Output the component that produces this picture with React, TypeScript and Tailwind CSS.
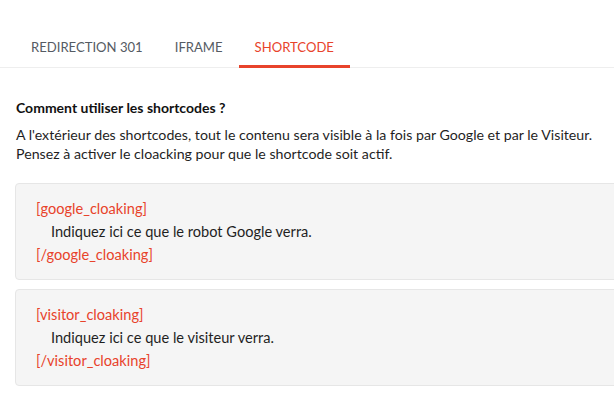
import { useState } from 'react';

const tabs = ['REDIRECTION 301', 'IFRAME', 'SHORTCODE'];

function CodeBox({ tag, body }: { tag: string; body: string }) {
  return (
    <div className="ml-[15px] -mr-[10px] rounded-[4px] border border-[#e6e6e6] bg-[#f5f5f5] px-[20px] py-[13px] text-[14.6px] leading-[23px]">
      <div className="text-[#e8432b]">[{tag}]</div>
      <div className="pl-[15px] text-[#1f1f1f]">{body}</div>
      <div className="text-[#e8432b]">[/{tag}]</div>
    </div>
  );
}

export default function App() {
  const [active, setActive] = useState(2);

  return (
    <div
      className="h-[409px] w-[614px] overflow-hidden bg-white"
      style={{ fontFamily: 'Lato, "Open Sans", sans-serif' }}
    >
      <div className="mt-[29px] flex border-b border-[#eeeeee] pl-[15px]">
        {tabs.map((t, i) => (
          <button
            key={t}
            onClick={() => setActive(i)}
            className={
              'relative -mb-px h-[39px] px-[16px] pt-px text-[13.1px] ' +
              (i === active
                ? 'border-b-[3px] border-[#e8432b] text-[#e8432b]'
                : 'border-b-[3px] border-transparent text-[#555b63]')
            }
          >
            {t}
          </button>
        ))}
      </div>

      <div className="px-[16px] pt-[31px]">
        <h3 className="text-[14px] font-bold leading-[18px] text-[#111111]">
          Comment utiliser les shortcodes ?
        </h3>
        <p className="mt-[8px] text-[14.2px] leading-[19px] text-[#1f1f1f]">
          A l&apos;extérieur des shortcodes, tout le contenu sera visible à la fois par Google et par le Visiteur.
          <br />
          Pensez à activer le cloacking pour que le shortcode soit actif.
        </p>
      </div>

      <div className="mt-[20px] flex flex-col gap-[9px]">
        <CodeBox tag="google_cloaking" body="Indiquez ici ce que le robot Google verra." />
        <CodeBox tag="visitor_cloaking" body="Indiquez ici ce que le visiteur verra." />
      </div>
    </div>
  );
}
